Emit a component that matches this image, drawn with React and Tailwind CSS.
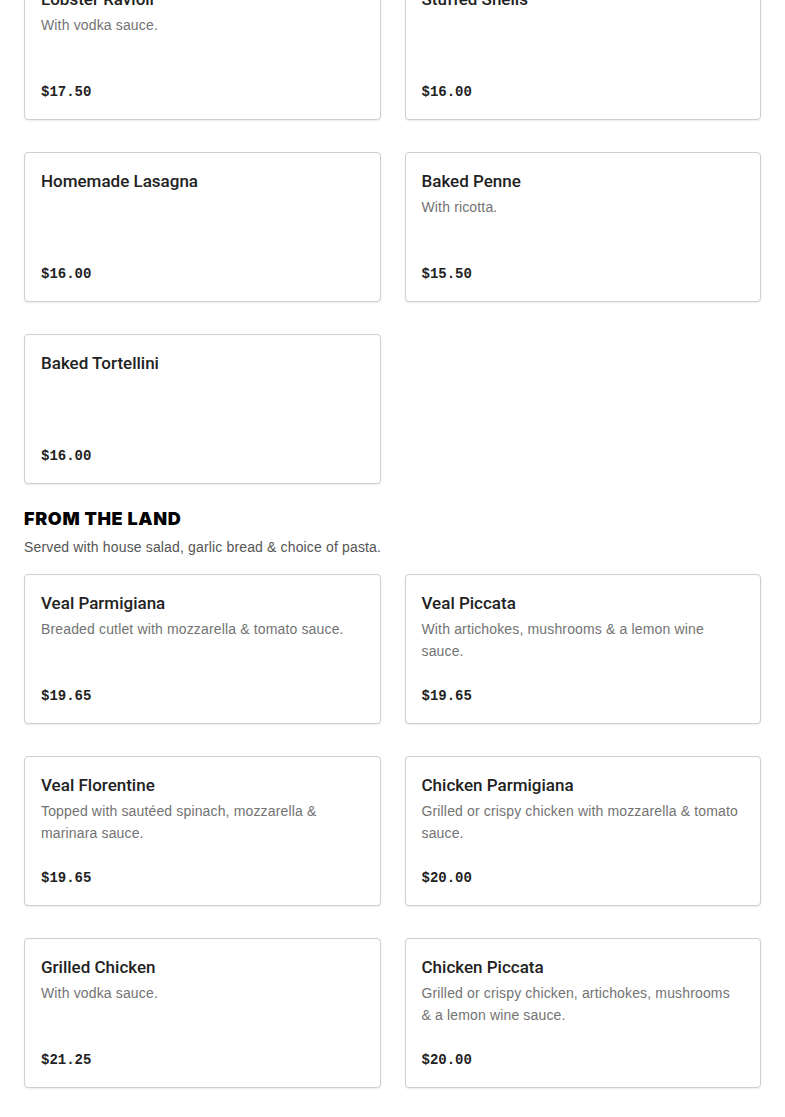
const pasta = [
  { name: "Lobster Ravioli", desc: "With vodka sauce.", price: "$17.50" },
  { name: "Stuffed Shells", desc: "", price: "$16.00" },
  { name: "Homemade Lasagna", desc: "", price: "$16.00" },
  { name: "Baked Penne", desc: "With ricotta.", price: "$15.50" },
  { name: "Baked Tortellini", desc: "", price: "$16.00" },
];

const land = [
  { name: "Veal Parmigiana", desc: "Breaded cutlet with mozzarella & tomato sauce.", price: "$19.65" },
  { name: "Veal Piccata", desc: "With artichokes, mushrooms & a lemon wine sauce.", price: "$19.65" },
  { name: "Veal Florentine", desc: "Topped with sautéed spinach, mozzarella & marinara sauce.", price: "$19.65" },
  { name: "Chicken Parmigiana", desc: "Grilled or crispy chicken with mozzarella & tomato sauce.", price: "$20.00" },
  { name: "Grilled Chicken", desc: "With vodka sauce.", price: "$21.25" },
  { name: "Chicken Piccata", desc: "Grilled or crispy chicken, artichokes, mushrooms & a lemon wine sauce.", price: "$20.00" },
];

const MenuCard = ({ item }) => (
  <div className="flex h-[150px] flex-col rounded-[4px] border border-[#cfcfcf] bg-white p-4 shadow-[0_1px_2px_rgba(0,0,0,0.08)]">
    <h3 className="font-['Roboto',sans-serif] text-[17px] leading-6 font-medium text-[#222]">{item.name}</h3>
    {item.desc && (
      <p className="mt-[3px] pr-[3px] text-[14px] leading-[22px] tracking-[0.15px] text-[#737373]">{item.desc}</p>
    )}
    <p className="mt-auto font-['Liberation_Mono',monospace] text-[14px] leading-[22px] font-bold text-[#222]">
      {item.price}
    </p>
  </div>
);

export default function App() {
  return (
    <div className="min-h-screen bg-white font-['Liberation_Sans',Arial,sans-serif]">
      <div className="-mt-[30px] px-6">
        {/* pasta section */}
        <div className="grid grid-cols-2 gap-x-6 gap-y-8">
          {pasta.map((item) => (
            <MenuCard key={item.name} item={item} />
          ))}
        </div>

        {/* from the land */}
        <section className="mt-[23px]">
          <h2 className="font-['Inter',sans-serif] text-[18px] leading-6 font-black tracking-[0.035em] text-black uppercase">
            From the Land
          </h2>
          <p className="mt-[5px] text-[14px] leading-[22px] tracking-[0.15px] text-[#555]">
            Served with house salad, garlic bread &amp; choice of pasta.
          </p>
          <div className="mt-4 grid grid-cols-2 gap-x-6 gap-y-8 pb-8">
            {land.map((item) => (
              <MenuCard key={item.name} item={item} />
            ))}
          </div>
        </section>
      </div>
    </div>
  );
}
